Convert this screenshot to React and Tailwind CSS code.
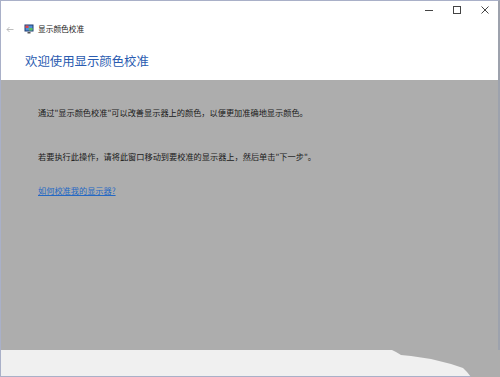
export default function App() {
  const font = { fontFamily: '"Noto Sans CJK SC", "Noto Sans", sans-serif' };
  return (
    <div className="w-[500px] h-[377px] overflow-hidden relative bg-[#adadad]" style={font}>
      <div className="w-full h-full flex flex-col border border-[#a9b0c8] border-r-[2px] border-r-[#9da2ad]">
        {/* white top */}
        <div className="bg-white h-[79px] flex flex-col shrink-0">
          <div className="h-[18px] flex items-center justify-end pr-[9px] gap-[20px] text-[#333]">
            <svg width="8" height="8" viewBox="0 0 8 8"><path d="M0 4.5H8" stroke="#444" strokeWidth="1" /></svg>
            <svg width="8" height="8" viewBox="0 0 8 8"><rect x="0.5" y="0.5" width="7" height="7" fill="none" stroke="#444" strokeWidth="1" /></svg>
            <svg width="8" height="8" viewBox="0 0 8 8"><path d="M0.5 0.5L7.5 7.5M7.5 0.5L0.5 7.5" stroke="#444" strokeWidth="1" /></svg>
          </div>
          <div className="h-[20px] flex items-center">
            <svg className="ml-[5px]" width="8" height="7" viewBox="0 0 8 7"><path d="M7.5 3.5H1M3.5 1L1 3.5L3.5 6" fill="none" stroke="#b5b5b5" strokeWidth="0.9" /></svg>
            <svg className="ml-[10px]" width="10" height="10" viewBox="0 0 10 10">
              <rect x="0.5" y="0.5" width="9" height="7" fill="#1f3a70" />
              <rect x="1.5" y="1.5" width="7" height="5" fill="#4f8fd6" />
              <rect x="1.5" y="1.5" width="3" height="2.5" fill="#e04848" />
              <rect x="5" y="4" width="3.5" height="2.5" fill="#5cc05c" />
              <rect x="3.5" y="8" width="3" height="1.5" fill="#555" />
            </svg>
            <span className="ml-[4px] text-[7.7px] leading-none text-[#222]">显示颜色校准</span>
          </div>
          <div className="pl-[24px] pt-[16px] text-[12.4px] leading-none text-[#2a5bb0]">欢迎使用显示颜色校准</div>
        </div>
        {/* gray content */}
        <div className="flex-1 bg-[#adadad] pl-[37px] pt-[26px] text-[8.2px] leading-[12px] text-[#1a1a1a]">
          <p>通过"显示颜色校准"可以改善显示器上的颜色，以便更加准确地显示颜色。</p>
          <p className="mt-[32px]">若要执行此操作，请将此窗口移动到要校准的显示器上，然后单击"下一步"。</p>
          <p className="mt-[22px]"><span className="underline text-[#2468c4]">如何校准我的显示器?</span></p>
        </div>
        {/* bottom bar */}
        <div className="h-[26px] bg-[#f0f0f0] shrink-0 relative">
          <svg className="absolute left-0 top-0" width="500" height="27" viewBox="0 0 500 27">
            <polygon points="391,0 395,2 400,5 410,6 430,9 450,14 462,18 466,22 470,27 500,27 500,0" fill="#adadad" />
          </svg>
        </div>
      </div>
    </div>
  );
}
